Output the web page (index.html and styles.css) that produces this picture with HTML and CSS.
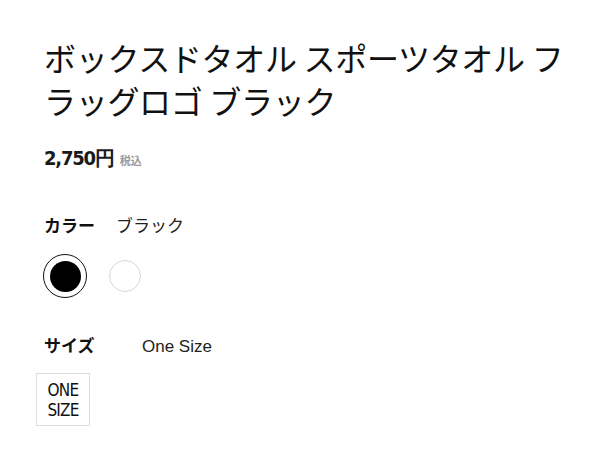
FILE: index.html
```html
<!DOCTYPE html>
<html lang="ja">
<head>
<meta charset="utf-8">
<link rel="stylesheet" href="styles.css">
</head>
<body>
<main class="product">
  <h1 class="title">ボックスドタオル スポーツタオル フラッグロゴ ブラック</h1>
  <div class="price"><span class="amount">2,750円</span><span class="tax">税込</span></div>
  <div class="option-row color-row"><span class="label">カラー</span><span class="value jp">ブラック</span></div>
  <div class="swatches">
    <span class="swatch selected"><span class="dot black"></span></span>
    <span class="swatch"><span class="dot white"></span></span>
  </div>
  <div class="option-row size-row"><span class="label">サイズ</span><span class="value en">One Size</span></div>
  <div class="sizes">
    <div class="size-box">ONE<br>SIZE</div>
  </div>
</main>
</body>
</html>
```
FILE: styles.css
```css
html, body {
  margin: 0;
  padding: 0;
  background: #fff;
  color: #111;
}
body {
  font-family: "Noto Sans CJK JP", "Noto Sans", sans-serif;
}
.product {
  padding: 36px 20px 0 44px;
  display: flex;
  flex-direction: column;
  align-items: flex-start;
}
.title {
  margin: 0;
  font-size: 32px;
  font-weight: 400;
  line-height: 43px;
  letter-spacing: -0.3px;
  color: #111;
}
.price {
  margin-top: 23px;
  display: flex;
  align-items: baseline;
  gap: 6px;
}
.amount {
  font-family: "DejaVu Sans Condensed", "Liberation Sans Narrow", sans-serif;
  font-stretch: condensed;
  font-weight: 700;
  font-size: 20px;
  letter-spacing: -1.2px;
  color: #1a1a1a;
}
.tax {
  font-size: 11px;
  font-weight: 700;
  color: #999;
}
.option-row {
  display: flex;
  align-items: baseline;
}
.color-row {
  margin-top: 40px;
}
.label {
  font-size: 17px;
  font-weight: 700;
  width: 72px;
}
.value.jp {
  font-size: 17px;
  color: #222;
}
.size-row .label {
  width: 98px;
}
.value.en {
  font-family: "Liberation Sans", Arial, sans-serif;
  font-size: 17px;
  color: #222;
}
.swatches {
  margin-top: 17px;
  margin-left: -1px;
  display: flex;
  align-items: center;
  gap: 16px;
}
.swatch {
  width: 42px;
  height: 42px;
  border-radius: 50%;
  border: 1px solid transparent;
  display: flex;
  align-items: center;
  justify-content: center;
}
.swatch.selected {
  border-color: #111;
  border-width: 1.5px;
}
.dot {
  width: 31px;
  height: 31px;
  border-radius: 50%;
  display: block;
}
.dot.black {
  background: #000;
}
.dot.white {
  width: 32px;
  height: 32px;
  box-sizing: border-box;
  background: #fff;
  border: 1px solid #d6d6d6;
}
.size-row {
  margin-top: 34px;
}
.sizes {
  margin-top: 16px;
  margin-left: -8px;
}
.size-box {
  width: 52px;
  height: 51px;
  border: 1px solid #ddd;
  display: flex;
  align-items: center;
  justify-content: center;
  text-align: center;
  font-family: "DejaVu Sans Condensed", "Liberation Sans Narrow", sans-serif;
  font-stretch: condensed;
  font-size: 17px;
  line-height: 20px;
  letter-spacing: -0.8px;
  color: #111;
}
```
